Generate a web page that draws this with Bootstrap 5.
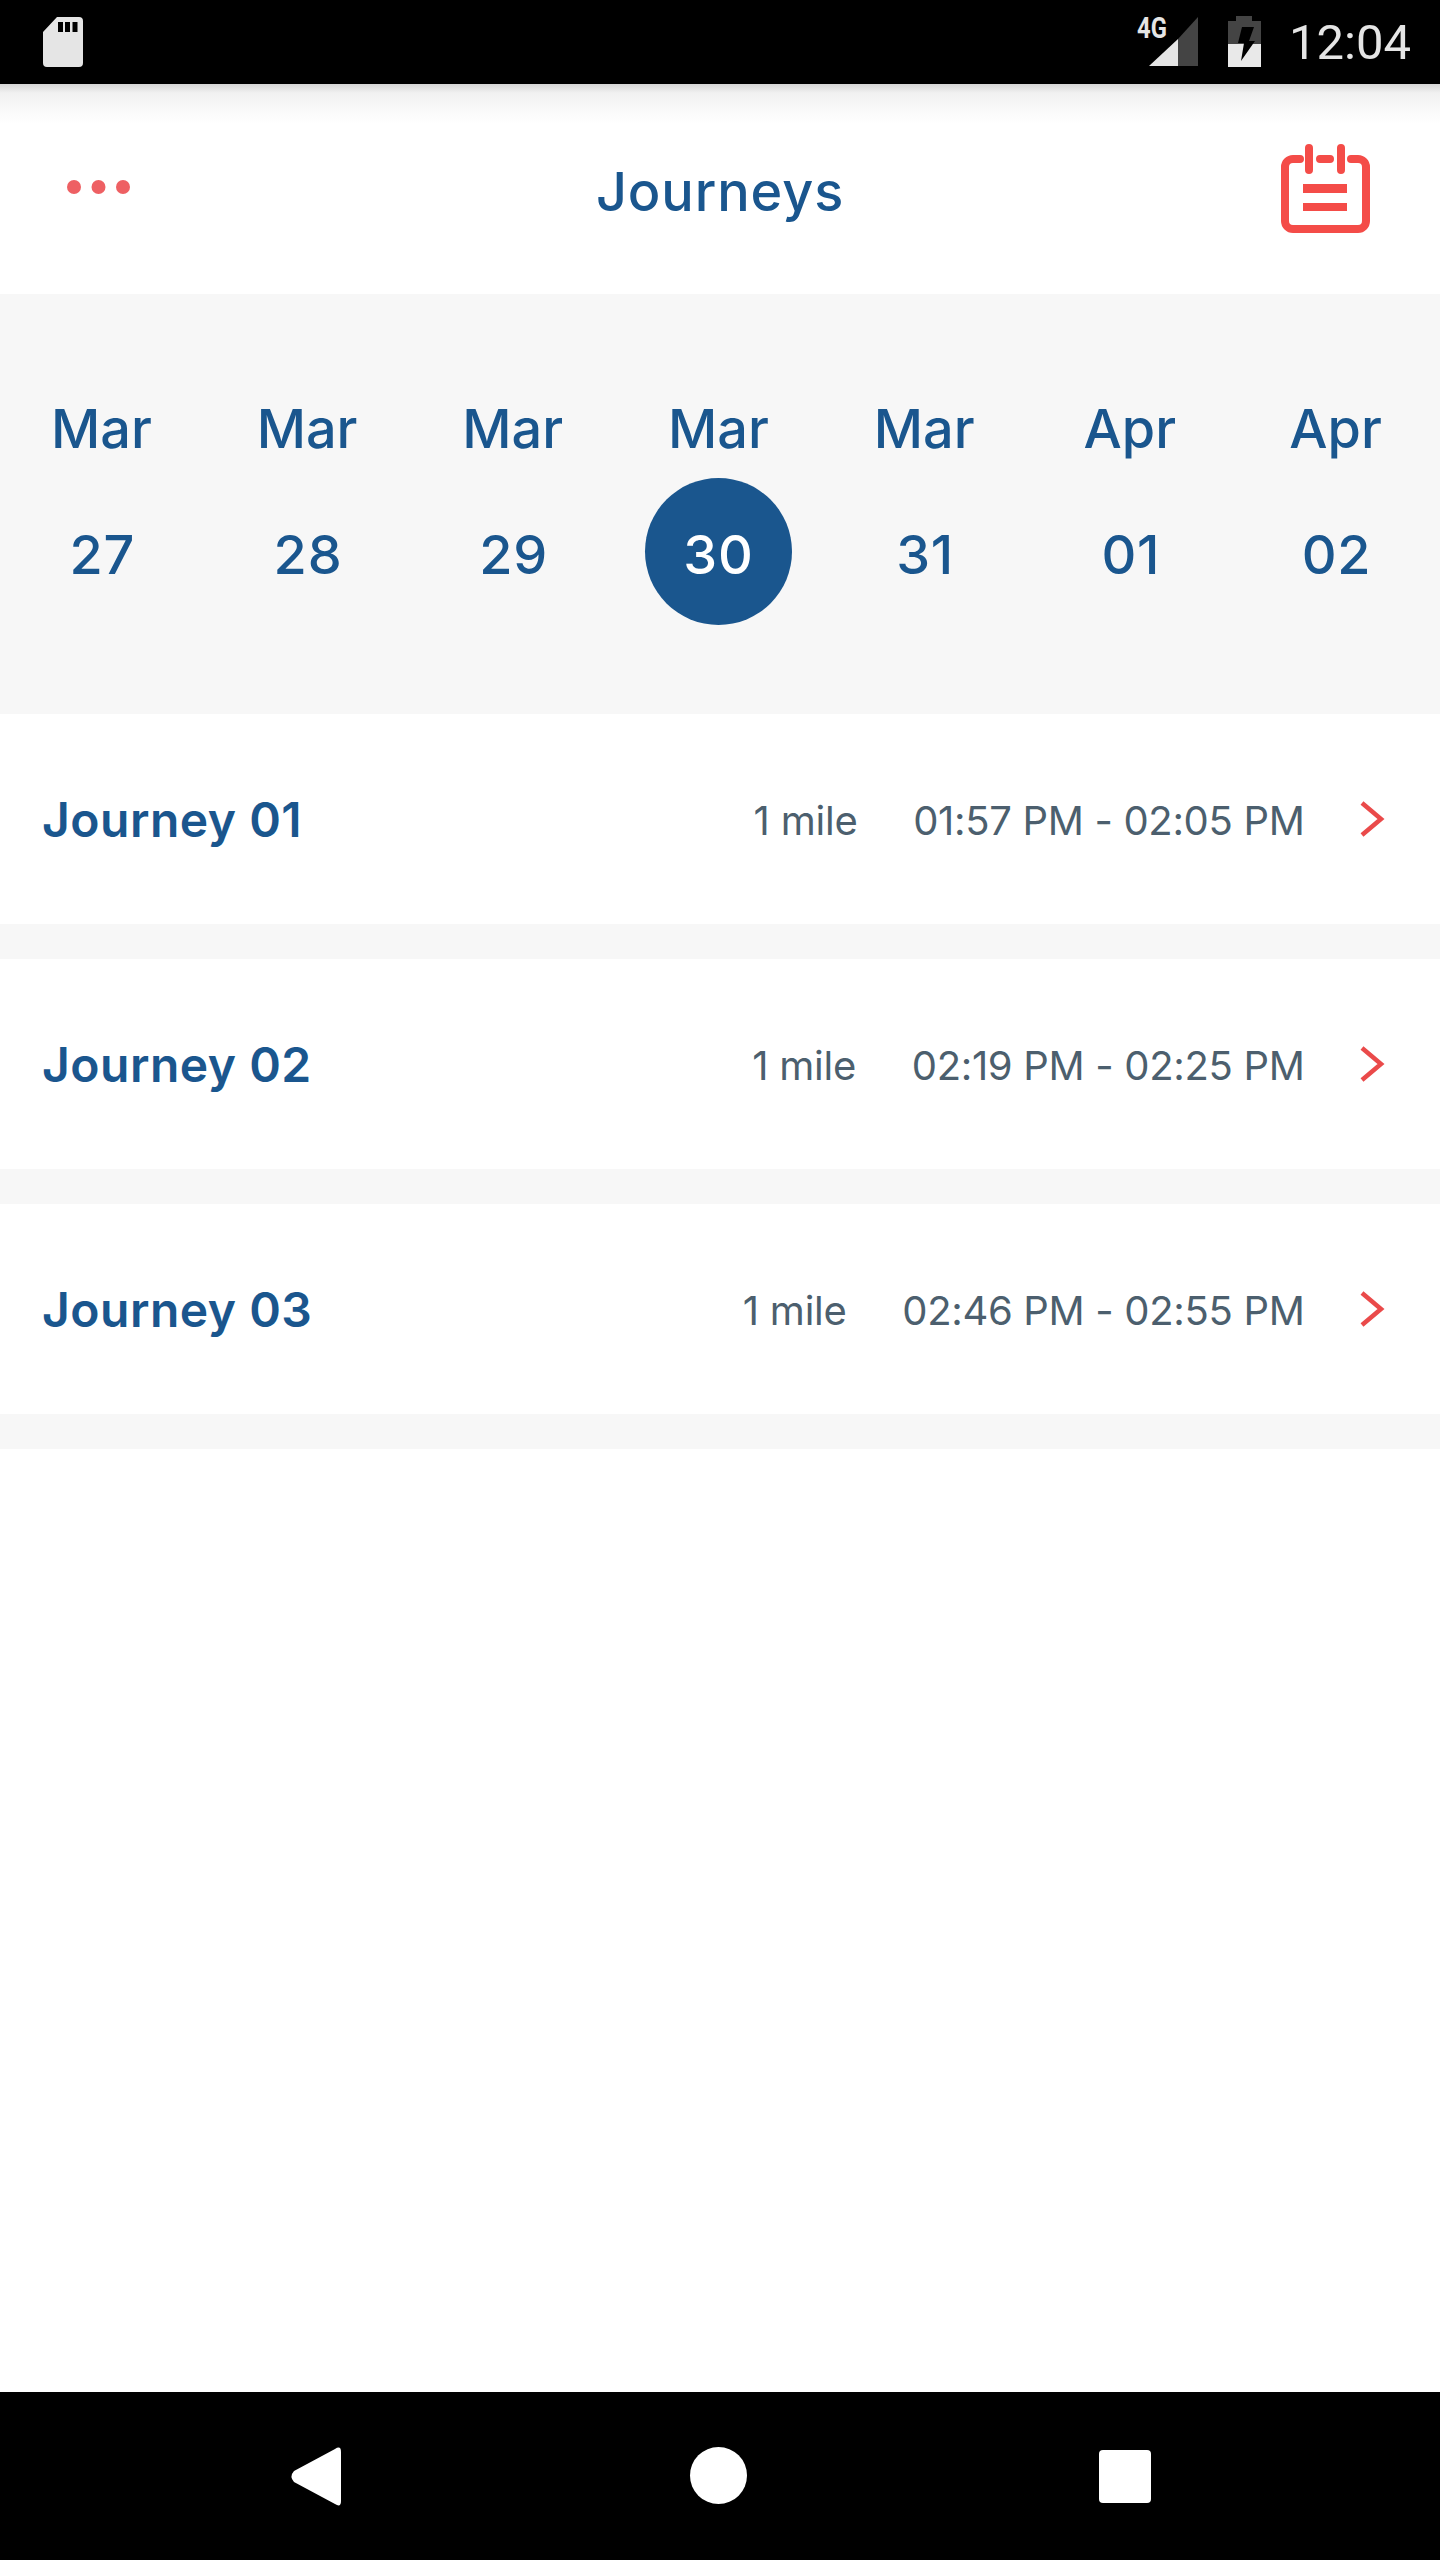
<!DOCTYPE html>
<html lang="en"><head><meta charset="utf-8">
<title>Journeys</title>
<link rel="stylesheet" href="https://cdn.jsdelivr.net/npm/bootstrap@5.3.0/dist/css/bootstrap.min.css">
<style>
html,body{height:2560px;background:#fff}
body{font-family:Inter,"Liberation Sans",sans-serif;color:#1a568e;margin:0;overflow:hidden}
.screen{height:2560px}
.sysbar{height:84px;background:#000;color:#e5e5e5}
.sys-inner{padding:17px 29px 0 43px}
.sig-wrap{width:61px;height:50px}
.sig-label{left:0;top:-6px;font-family:Roboto,sans-serif;font-weight:700;font-size:29px;line-height:34px;color:#e5e5e5;transform:scaleX(.82);transform-origin:0 50%}
.batt{margin:-1px 0 0 30px}
.clock{font-family:Roboto,sans-serif;font-size:49px;line-height:56px;margin:-2px 0 0 28px}
.topnav{height:210px;background:linear-gradient(#d6d6d6 0,#f1f1f1 9px,#fbfbfb 30px,#fff 40px);padding:0 70px}
.nav-side{flex:1 1 0}
.dots{margin:0 0 4px -3.5px}
.cal-icon{margin-bottom:1px}
.nav-title{font-size:54px;line-height:64px;font-weight:500;letter-spacing:.9px;color:#1a568e;margin-top:6px}
.datestrip{height:420px;background:#f7f7f7;padding-top:103px}
.daycell{width:14.2857%;text-align:center;font-size:54px;font-weight:500;line-height:64px}
.daycell:first-child{margin-left:-1.5px}
.daynum{width:147px;height:147px;line-height:153px;border-radius:50%;margin:17px auto 0;letter-spacing:.8px;padding-left:2px}
.daynum.picked{background:#1a568e;color:#fff;padding-left:0}
.jrow{height:210px;padding:0 55px 0 42px;background:#fff}
.jgap{height:35px;background:#f7f7f7}
.jname{font-size:48px;font-weight:600;color:#1a568e;letter-spacing:.5px;margin-top:2px}
.jdist{font-size:40px;color:#4c5f6e;margin:3px 55.500px 0 0;letter-spacing:-.2px}
.jtime{font-size:40px;color:#4c5f6e;margin:3px 54.500px 0 0;letter-spacing:-.32px}
.softbar{height:168px;background:#000;margin-top:943px}
</style></head>
<body>
<div class="screen d-flex flex-column">
 <div class="sysbar">
  <div class="sys-inner d-flex align-items-start">
   <svg width="40" height="50" viewBox="0 0 40 50"><path fill="#e5e5e5" fill-rule="evenodd" d="M14 0h22a4 4 0 0 1 4 4v42a4 4 0 0 1-4 4H4a4 4 0 0 1-4-4V15zM15 5v10h5V5zM22 5v10h5V5zM29.500 5v10h5V5z"/></svg>
   <div class="ms-auto d-flex align-items-start">
    <div class="sig-wrap position-relative">
     <svg width="61" height="50" viewBox="0 0 61 50"><path fill="#444" d="M61 0v49H41V22z"/><path fill="#e5e5e5" d="M41 22v27H12z"/></svg>
     <span class="sig-label position-absolute">4G</span>
    </div>
    <svg class="batt flex-shrink-0" width="33" height="51" viewBox="0 0 33 51"><path fill="#444" d="M8 0h16v5h9v23H0V5h8z"/><path fill="#e9e9e9" d="M0 28h33v23H0z"/><path d="M14 11h12l-5 14h6L13 45l3-18h-6z" fill="#000"/></svg>
    <div class="clock">12:04</div>
   </div>
  </div>
 </div>
 <div class="topnav d-flex align-items-center">
  <div class="nav-side d-flex"><svg class="dots" width="63" height="14" viewBox="0 0 63 14"><circle cx="7" cy="7" r="7" fill="#ee6063"/><circle cx="31.500" cy="7" r="7" fill="#ee6063"/><circle cx="56" cy="7" r="7" fill="#ee6063"/></svg></div>
  <div class="nav-title">Journeys</div>
  <div class="nav-side d-flex justify-content-end"><svg class="cal-icon" width="89" height="89" viewBox="0 0 89 89"><g fill="none" stroke="#f44c48" stroke-width="8" stroke-linecap="round"><path d="M19 15H12a8 8 0 0 0-8 8v54a8 8 0 0 0 8 8h65a8 8 0 0 0 8-8V23a8 8 0 0 0-8-8H70"/><path d="M28 4v22M60 4v22M39 15h10"/></g><path fill="#f44c48" d="M22 40h44v9H22zM22 59h44v8H22z"/></svg></div>
 </div>
 <div class="datestrip d-flex">
  <div class="daycell"><div>Mar</div><div class="daynum">27</div></div>
  <div class="daycell"><div>Mar</div><div class="daynum">28</div></div>
  <div class="daycell"><div>Mar</div><div class="daynum">29</div></div>
  <div class="daycell"><div>Mar</div><div class="daynum picked">30</div></div>
  <div class="daycell"><div>Mar</div><div class="daynum">31</div></div>
  <div class="daycell"><div>Apr</div><div class="daynum">01</div></div>
  <div class="daycell"><div>Apr</div><div class="daynum">02</div></div>
 </div>
 <div class="jrow d-flex align-items-center"><div class="jname me-auto">Journey 01</div><div class="jdist">1 mile</div><div class="jtime">01:57 PM - 02:05 PM</div><svg width="26" height="36" viewBox="0 0 26 36"><path d="M3 2l19 16L3 34" fill="none" stroke="#ea4a4a" stroke-width="4.500"/></svg></div>
 <div class="jgap"></div>
 <div class="jrow d-flex align-items-center"><div class="jname me-auto">Journey 02</div><div class="jdist">1 mile</div><div class="jtime">02:19 PM - 02:25 PM</div><svg width="26" height="36" viewBox="0 0 26 36"><path d="M3 2l19 16L3 34" fill="none" stroke="#ea4a4a" stroke-width="4.500"/></svg></div>
 <div class="jgap"></div>
 <div class="jrow d-flex align-items-center"><div class="jname me-auto">Journey 03</div><div class="jdist">1 mile</div><div class="jtime">02:46 PM - 02:55 PM</div><svg width="26" height="36" viewBox="0 0 26 36"><path d="M3 2l19 16L3 34" fill="none" stroke="#ea4a4a" stroke-width="4.500"/></svg></div>
 <div class="jgap"></div>
 <div class="softbar">
  <svg width="1440" height="168" viewBox="0 0 1440 168"><path fill="#fff" d="M335 57Q341 53 341 60V109Q341 116 335 112L294 90Q289 84.500 294 79Z"/><circle cx="718.500" cy="83.500" r="28.500" fill="#fff"/><rect x="1099" y="58" width="52" height="53" rx="4" fill="#fff"/></svg>
 </div>
</div>
</body></html>
